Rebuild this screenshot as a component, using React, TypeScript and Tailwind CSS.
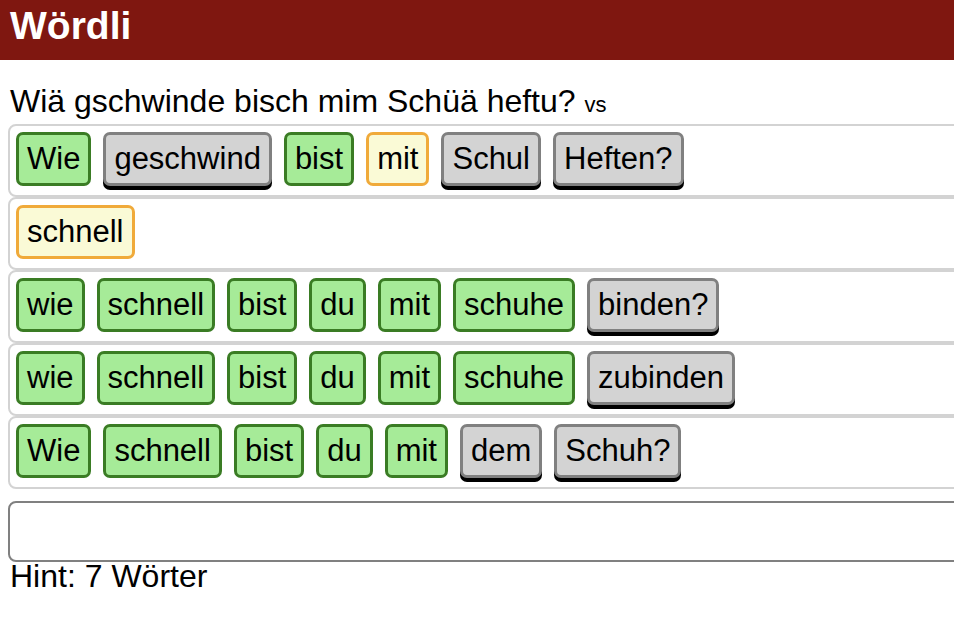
import React from "react";

type Kind = "g" | "y" | "x";
const rows: [string, Kind][][] = [
  [["Wie", "g"], ["geschwind", "x"], ["bist", "g"], ["mit", "y"], ["Schul", "x"], ["Heften?", "x"]],
  [["schnell", "y"]],
  [["wie", "g"], ["schnell", "g"], ["bist", "g"], ["du", "g"], ["mit", "g"], ["schuhe", "g"], ["binden?", "x"]],
  [["wie", "g"], ["schnell", "g"], ["bist", "g"], ["du", "g"], ["mit", "g"], ["schuhe", "g"], ["zubinden", "x"]],
  [["Wie", "g"], ["schnell", "g"], ["bist", "g"], ["du", "g"], ["mit", "g"], ["dem", "x"], ["Schuh?", "x"]],
];

function Chip({ text, kind }: { text: string; kind: Kind }) {
  const base =
    "inline-block h-[54px] px-[8px] py-[7px] border-[3px] rounded-[7px] text-[31px] leading-[34px] text-black whitespace-nowrap";
  if (kind === "g") return <span className={base + " bg-[#a6eb98] border-[#3a7c24]"}>{text}</span>;
  if (kind === "y") return <span className={base + " bg-[#fafad6] border-[#f0aa3a]"}>{text}</span>;
  return <span className={base + " bg-[#d3d3d3] border-[#808080] shadow-[0_4px_0_#000]"}>{text}</span>;
}

export default function App() {
  return (
    <div className="w-[954px] h-[624px] overflow-hidden bg-white" style={{ fontFamily: '"Liberation Sans", Arial, sans-serif' }}>
      <div className="h-[60px] bg-[#7f1710] pl-[10px]">
        <div className="text-white font-bold text-[39px] leading-[52px]">Wördli</div>
      </div>
      <div className="mt-[24px] pl-[10px] text-[32px] leading-[34px] text-black whitespace-nowrap">
        Wiä gschwinde bisch mim Schüä heftu? <span className="text-[22px] leading-none">vs</span>
      </div>
      <div className="mt-[6px] ml-[8px] w-[1000px] flex flex-col">
        {rows.map((r, i) => (
          <div key={i} className="h-[73px] border-2 border-[#d3d3d3] rounded-[8px] pl-[6px] pt-[6px] flex items-start gap-[12px]">
            {r.map(([t, k], j) => (
              <Chip key={j} text={t} kind={k} />
            ))}
          </div>
        ))}
      </div>
      <div className="mt-[12px] ml-[8px] w-[1000px] h-[61px] border-2 border-[#808080] rounded-[8px]" />
      <div className="pl-[10px] text-[32px] leading-[28px] text-black">Hint: 7 Wörter</div>
    </div>
  );
}
